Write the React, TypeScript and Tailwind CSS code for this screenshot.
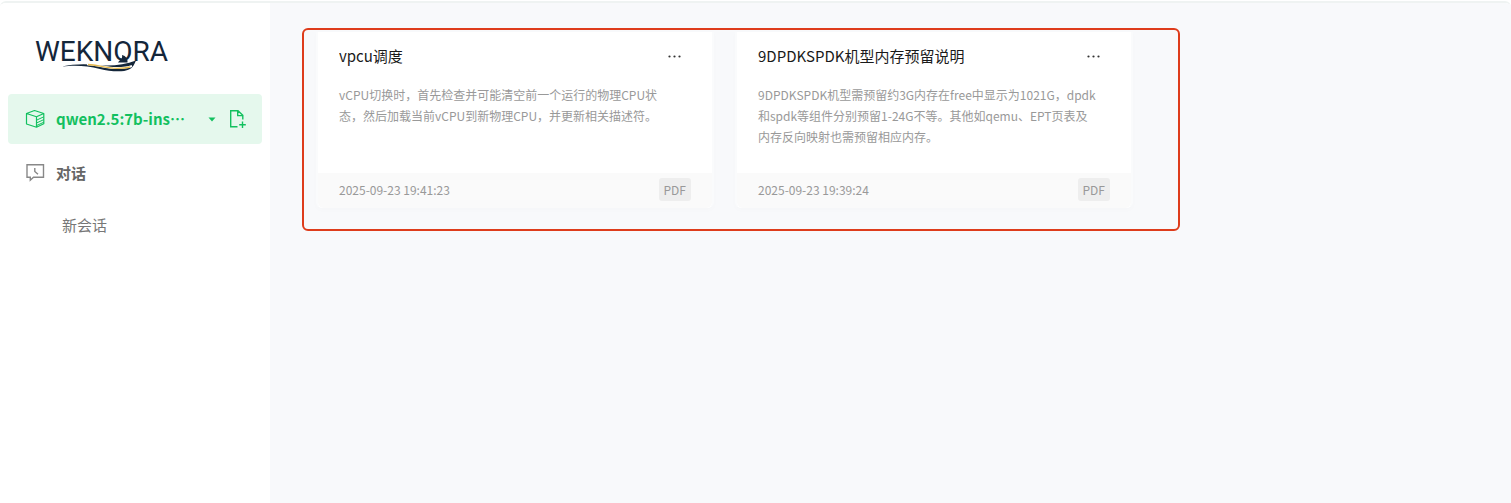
import React from "react";

type Doc = { title: string; lines: string[]; time: string; type: string };

const docs: Doc[] = [
  {
    title: "vpcu调度",
    lines: [
      "vCPU切换时，首先检查并可能清空前一个运行的物理CPU状",
      "态，然后加载当前vCPU到新物理CPU，并更新相关描述符。",
    ],
    time: "2025-09-23 19:41:23",
    type: "PDF",
  },
  {
    title: "9DPDKSPDK机型内存预留说明",
    lines: [
      "9DPDKSPDK机型需预留约3G内存在free中显示为1021G，dpdk",
      "和spdk等组件分别预留1-24G不等。其他如qemu、EPT页表及",
      "内存反向映射也需预留相应内存。",
    ],
    time: "2025-09-23 19:39:24",
    type: "PDF",
  },
];

function Logo() {
  return (
    <a href="#" className="ml-[35px] mt-[33px] block h-10 w-36 text-[#14263a]">
      <svg viewBox="0 0 144 40" className="h-10 w-36" role="img" aria-label="WEKNORA">
        <text x="0" y="25" fontSize="28" fill="currentColor" className="font-['Roboto',sans-serif]">
          WEKNORA
        </text>
        <path d="M83 26.500 C84 24 88 23.500 87 19 C91 20 93 23 92.500 26.500 Z" fill="currentColor" />
        <path
          d="M27 30.500 C38 28 50 27.500 62 29 C76 30.500 89 29 101 24.500 C99 29 98 31.500 94 33.500 C88 36.500 75 35.500 65 33 C52 30 42 29 27 30.500 Z"
          fill="currentColor"
        />
        <path d="M52 28.200 C60 28.200 68 31.200 78 32 C86 32.300 92 31.800 97 30" fill="none" stroke="#fff" strokeWidth="1.900" />
        <path d="M53 28.500 C61 28.500 68 31.500 78 32.200 C85 32.500 91 32 95 31" fill="none" stroke="#e6b94d" strokeWidth="1.300" />
      </svg>
    </a>
  );
}

function BoxIcon() {
  return (
    <svg viewBox="0 0 20 20" className="size-5 shrink-0" fill="none" stroke="currentColor" strokeWidth="1.200" strokeLinejoin="round" aria-hidden="true">
      <path d="M1.500 4.500 9.500 1.500 18.800 4.500V14.800L11.500 18.200 1.500 15Z M1.500 4.500 11.500 7.800 18.800 4.500 M11.500 7.800V18.200" />
      <path d="M11.500 11.200 18.800 7.800 M11.500 14 18.800 10.600 M11.500 16.600 18.800 13.200" strokeWidth="1" />
    </svg>
  );
}

function FileAddIcon() {
  return (
    <svg viewBox="0 0 18 20" className="h-5 w-[18px]" fill="none" stroke="currentColor" strokeWidth="1.400" aria-hidden="true">
      <path d="M8.500 17.800H1.700V1.700H9L13.800 6.300V10.500 M8.700 1.700V6.600H13.800 M13.500 12.500V19 M10.200 15.800H16.800" />
    </svg>
  );
}

function ChatIcon() {
  return (
    <svg viewBox="0 0 20 20" className="size-5 shrink-0 text-[#888]" fill="none" stroke="currentColor" strokeWidth="1.400" aria-hidden="true">
      <path d="M2 1.700H18.500V14.200H8.500L5.300 17.200V14.200H2Z M9.800 5V8.500L13 11.300" />
    </svg>
  );
}

function DocCard({ doc }: { doc: Doc }) {
  return (
    <article className="flex min-w-0 flex-col rounded-b-md border-x-2 border-[#fafbfc] bg-white shadow-[0_2px_6px_rgba(0,0,0,0.016)]">
      <div className="flex min-h-[141px] flex-col gap-[17px] px-[21px] pt-[13px]">
        <div className="flex items-center justify-between">
          <h2 className="truncate text-[15px] leading-[22px] text-[#1a1a1a]">{doc.title}</h2>
          <button type="button" aria-label="更多" className="mr-1 flex h-[22px] w-6 items-center justify-center text-[#333]">
            <svg viewBox="0 0 16 4" className="h-1 w-4" fill="currentColor" aria-hidden="true">
              <circle cx="2.500" cy="2.500" r="1.100" />
              <circle cx="7.500" cy="2.500" r="1.100" />
              <circle cx="12.500" cy="2.500" r="1.100" />
            </svg>
          </button>
        </div>
        <p className="text-[12px] leading-[21px] text-[#999]">
          {doc.lines.map((line) => (
            <span key={line} className="block whitespace-nowrap">
              {line}
            </span>
          ))}
        </p>
      </div>
      <footer className="flex h-[35px] items-center justify-between rounded-b-md bg-[#fafafa] px-[21px] pb-[2px] text-[12px] text-[#999]">
        <time>{doc.time}</time>
        <span className="rounded-[3px] bg-[#eee] px-[5px] leading-[23px]">{doc.type}</span>
      </footer>
    </article>
  );
}

export default function App() {
  return (
    <div lang="zh-CN" className="min-h-screen bg-white pt-px font-['Noto_Sans_CJK_SC',sans-serif]">
      <div className="flex min-h-[calc(100vh-1px)] overflow-hidden rounded-t-md border-t-2 border-[#eff3f2]">
        <aside className="w-[270px] shrink-0 bg-white">
          <Logo />
          <nav className="mt-[18px] flex flex-col px-2">
            <div className="flex h-[50px] items-center rounded-[4px] bg-[#e5f8ed] pl-[17px] pr-[15px] text-[#12c05f]">
              <button type="button" className="flex min-w-0 flex-1 items-center text-left">
                <BoxIcon />
                <span className="ml-[11px] flex-1 whitespace-nowrap text-[15px] font-bold">qwen2.5:7b-ins…</span>
                <svg viewBox="0 0 8 5" className="mr-[13px] h-[5px] w-2" fill="currentColor" aria-hidden="true">
                  <path d="M.5.5H7.500L4 4.500Z" />
                </svg>
              </button>
              <button type="button" aria-label="上传文档">
                <FileAddIcon />
              </button>
            </div>
            <a href="#chat" className="mt-1 flex h-[50px] items-center gap-[11px] pl-[17px] text-[15px] font-bold text-[#666]">
              <ChatIcon />
              对话
            </a>
            <a href="#new" className="flex h-[54px] items-center pl-[54px] text-[15px] text-[#777]">
              新会话
            </a>
          </nav>
        </aside>
        <main className="min-w-0 flex-1 bg-[#f8f9fb] pl-8 pt-[25px]">
          <section className="grid max-w-[878px] grid-cols-2 gap-[21px] rounded-md border-2 border-[#de3c1b] pb-[21px] pl-3 pr-[45px] pt-[2px]">
            {docs.map((doc) => (
              <DocCard key={doc.title} doc={doc} />
            ))}
          </section>
        </main>
      </div>
    </div>
  );
}
